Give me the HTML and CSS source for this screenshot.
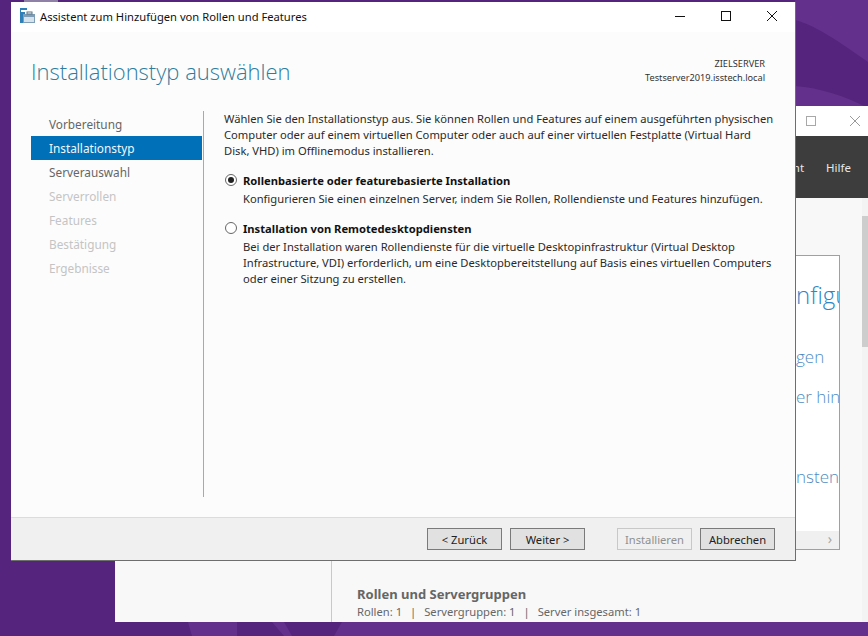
FILE: index.html
```html
<!DOCTYPE html>
<html lang="de">
<head>
  <meta charset="UTF-8">
  <meta name="viewport" content="width=device-width, initial-scale=1.0">
  <title>Assistent zum Hinzufügen von Rollen und Features</title>
  <link rel="stylesheet" href="styles.css">
</head>
<body>
  <div class="desktop">
    <svg class="wallpaper" width="868" height="636" viewBox="0 0 868 636">
      <path d="M795 0H868V62C840 42 815 25 795 20Z" fill="#63318c"/>
      <path d="M795 86C820 88 845 96 868 108V106H795Z" fill="#63318c"/>
      <path d="M188 622H237V636H192Z" fill="#63318c"/>
      <path d="M272 622H284L292 636H284Z" fill="#63318c"/>
      <path d="M342 622H868V636H334Z" fill="#63318c"/>
      <rect x="24" y="0" width="34" height="2" fill="#8f80a8"/>
    </svg>
    <div class="brand">WORTMANN AG</div>

    <!-- Server-Manager im Hintergrund -->
    <div class="back-window">
      <div class="back-title">
        <span class="back-max"></span>
        <svg class="back-close" width="12" height="12" viewBox="0 0 12 12"><path d="M1 1L11 11M11 1L1 11" stroke="#9a9a9a" fill="none"/></svg>
      </div>
      <div class="back-menu">
        <span class="menu-cut">ht</span>
        <span class="menu-item">Hilfe</span>
      </div>
      <div class="back-body">
        <div class="back-side"></div>
        <div class="back-main">
          <div class="back-card">
            <div class="card-lines">
              <div class="card-head">nfigu</div>
              <div class="card-link first">gen</div>
              <div class="card-link second">er hin</div>
              <div class="card-link third">nsten</div>
            </div>
            <div class="card-scroll"><span>&#8250;</span></div>
          </div>
          <h3 class="group-title">Rollen und Servergruppen</h3>
          <p class="group-info">Rollen: 1<span class="sep">|</span>Servergruppen: 1<span class="sep">|</span>Server insgesamt: 1</p>
        </div>
        <div class="back-scrollbar"><div class="back-thumb"></div></div>
      </div>
    </div>

    <!-- Assistent -->
    <div class="dialog">
      <div class="titlebar">
        <svg class="app-icon" width="15" height="16" viewBox="0 0 15 16">
          <rect x="0" y="0" width="5" height="15" fill="#2f7fb8"/>
          <rect x="1" y="2" width="6" height="2" fill="#fff"/>
          <rect x="5" y="0" width="2" height="2" fill="#2f7fb8"/>
          <rect x="3" y="6" width="12" height="9" fill="#7f9db5"/>
          <rect x="4" y="9" width="10" height="5" fill="#d7e3ec"/>
          <rect x="7" y="4" width="5" height="2" fill="none" stroke="#5b7488"/>
        </svg>
        <span class="title-text">Assistent zum Hinzufügen von Rollen und Features</span>
        <div class="win-buttons">
          <svg width="12" height="12" viewBox="0 0 12 12"><path d="M1 6.5H11" stroke="#111" fill="none"/></svg>
          <svg width="12" height="12" viewBox="0 0 12 12"><rect x="1.5" y="1.5" width="9" height="9" stroke="#111" fill="none"/></svg>
          <svg width="12" height="12" viewBox="0 0 12 12"><path d="M1 1L11 11M11 1L1 11" stroke="#111" fill="none"/></svg>
        </div>
      </div>

      <div class="head">
        <h1>Installationstyp auswählen</h1>
        <div class="target">
          <div>ZIELSERVER</div>
          <div>Testserver2019.isstech.local</div>
        </div>
      </div>

      <div class="content">
        <ul class="steps">
          <li>Vorbereitung</li>
          <li class="active">Installationstyp</li>
          <li>Serverauswahl</li>
          <li class="off">Serverrollen</li>
          <li class="off">Features</li>
          <li class="off">Bestätigung</li>
          <li class="off">Ergebnisse</li>
        </ul>
        <div class="pane">
          <p class="intro">Wählen Sie den Installationstyp aus. Sie können Rollen und Features auf einem ausgeführten physischen Computer oder auf einem virtuellen Computer oder auch auf einer virtuellen Festplatte (Virtual Hard Disk, VHD) im Offlinemodus installieren.</p>
          <div class="option">
            <span class="radio checked"></span>
            <div>
              <div class="option-title">Rollenbasierte oder featurebasierte Installation</div>
              <p>Konfigurieren Sie einen einzelnen Server, indem Sie Rollen, Rollendienste und Features hinzufügen.</p>
            </div>
          </div>
          <div class="option">
            <span class="radio"></span>
            <div>
              <div class="option-title">Installation von Remotedesktopdiensten</div>
              <p>Bei der Installation waren Rollendienste für die virtuelle Desktopinfrastruktur (Virtual Desktop Infrastructure, VDI) erforderlich, um eine Desktopbereitstellung auf Basis eines virtuellen Computers oder einer Sitzung zu erstellen.</p>
            </div>
          </div>
        </div>
      </div>

      <div class="footer">
        <button class="btn">&lt; Zurück</button>
        <button class="btn">Weiter &gt;</button>
        <button class="btn disabled gap-left">Installieren</button>
        <button class="btn">Abbrechen</button>
      </div>
    </div>
  </div>
</body>
</html>
```

FILE: styles.css
```css
* {
  margin: 0;
  padding: 0;
  box-sizing: border-box;
}
body {
  font-family: "Noto Sans", "Open Sans", sans-serif;
  font-size: 11.2px;
  color: #222;
  overflow: hidden;
}
.desktop {
  position: relative;
  width: 868px;
  height: 636px;
  background-color: #55247c;
  overflow: hidden;
}
.wallpaper {
  position: absolute;
  left: 0;
  top: 0;
}
.brand {
  position: absolute;
  left: 578px;
  top: 585px;
  font-family: "Liberation Sans", sans-serif;
  font-weight: bold;
  font-size: 41.5px;
  line-height: 46px;
  color: #f1ecf5;
  white-space: nowrap;
}

/* Hintergrundfenster */
.back-window {
  position: absolute;
  left: 115px;
  top: 106px;
  width: 753px;
  height: 516px;
  display: flex;
  flex-direction: column;
  background-color: #f8f8f8;
}
.back-title {
  height: 30px;
  flex: none;
  background-color: #fff;
  display: flex;
  align-items: center;
  justify-content: flex-end;
  gap: 33px;
  padding-right: 7px;
}
.back-max {
  width: 10px;
  height: 10px;
  border: 1px solid #a8a8a8;
}
.back-menu {
  height: 62px;
  flex: none;
  background-color: #3d3d3d;
  color: #e8e8e8;
  font-size: 11.5px;
  display: flex;
  justify-content: flex-end;
  align-items: center;
  gap: 22px;
  padding-right: 17px;
}
.back-body {
  flex: 1;
  display: flex;
  min-height: 0;
}
.back-side {
  width: 217px;
  flex: none;
  border-right: 1px solid #c9c9c9;
}
.back-main {
  flex: 1;
  padding: 57px 0 0 25px;
  position: relative;
}
.back-card {
  width: 483px;
  height: 295px;
  background-color: #fff;
  border: 1px solid #a0a0a0;
  display: flex;
  flex-direction: column;
  align-items: flex-end;
}
.card-lines {
  flex: 1;
  width: 43px;
  overflow: hidden;
  white-space: nowrap;
  color: #4f8cc4;
  font-family: "Open Sans", sans-serif;
  font-size: 17px;
  font-weight: 300;
}
.card-head {
  font-size: 24px;
  color: #2f86c4;
  margin-top: 24px;
  line-height: 30px;
}
.card-link {
  line-height: 24px;
}
.card-link.first {
  margin-top: 35px;
}
.card-link.second {
  margin-top: 16px;
}
.card-link.third {
  margin-top: 56px;
}
.card-scroll {
  width: 100%;
  height: 18px;
  background-color: #f0f0f0;
  color: #a5a5a5;
  font-size: 14px;
  line-height: 16px;
  text-align: right;
  padding-right: 7px;
}
.group-title {
  margin-top: 36px;
  font-size: 13px;
  font-weight: bold;
  color: #666;
  line-height: 16px;
}
.group-info {
  color: #666;
  line-height: 16px;
  margin-top: 2px;
}
.sep {
  margin: 0 8px;
}
.back-scrollbar {
  width: 6px;
  flex: none;
  background-color: #f3f3f3;
  padding-top: 18px;
}
.back-thumb {
  height: 131px;
  background-color: #cdcdcd;
}

/* Assistent */
.dialog {
  position: absolute;
  left: 11px;
  top: 2px;
  width: 785px;
  height: 559px;
  display: flex;
  flex-direction: column;
  background-color: #fcfcfc;
  border-right: 1px solid #6e6e6e;
  border-bottom: 1px solid #6e6e6e;
}
.titlebar {
  height: 30px;
  flex: none;
  background-color: #fff;
  display: flex;
  align-items: center;
  padding: 0 0 2px 9px;
}
.app-icon {
  margin-right: 5px;
}
.title-text {
  color: #111;
}
.win-buttons {
  margin-left: auto;
  display: flex;
  gap: 34px;
  padding-right: 17px;
}
.head {
  height: 75px;
  flex: none;
  display: flex;
  justify-content: space-between;
  padding: 23px 30px 0 20px;
}
h1 {
  font-family: "Open Sans", "Noto Sans", sans-serif;
  font-weight: 300;
  font-size: 22px;
  line-height: 32px;
  color: #2f7d9e;
}
.target {
  text-align: right;
  font-size: 9.2px;
  line-height: 14px;
  color: #333;
  padding-top: 2px;
}
.content {
  flex: 1;
  display: flex;
  padding: 4px 0 20px 20px;
  min-height: 0;
}
.steps {
  list-style: none;
  width: 172px;
  flex: none;
  padding: 1px 1px 0 0;
}
.steps li {
  height: 24px;
  line-height: 24px;
  padding-left: 18px;
  color: #666;
  font-size: 11.8px;
}
.steps li.active {
  background-color: #0070b8;
  color: #f2f8fc;
}
.steps li.off {
  color: #c4c4c4;
}
.pane {
  flex: 1;
  border-left: 1px solid #a9a9a9;
  padding: 0 16px 0 20px;
  color: #2a2a2a;
  line-height: 16px;
}
.intro {
  margin-bottom: 13px;
}
.option {
  display: flex;
  gap: 6px;
  margin-left: 1px;
  margin-bottom: 13px;
}
.option-title {
  font-weight: bold;
  color: #111;
  margin-bottom: 2px;
  margin-top: 1px;
}
.radio {
  width: 12px;
  height: 12px;
  flex: none;
  margin-top: 2px;
  border: 1px solid #666;
  border-radius: 50%;
  background-color: #fff;
  display: flex;
  align-items: center;
  justify-content: center;
}
.radio.checked::after {
  content: "";
  width: 6px;
  height: 6px;
  border-radius: 50%;
  background-color: #222;
}
.footer {
  height: 43px;
  flex: none;
  background-color: #f0f0f0;
  border-top: 1px solid #dcdcdc;
  display: flex;
  justify-content: flex-end;
  align-items: flex-start;
  gap: 8px;
  padding: 10px 20px 0 0;
}
.btn {
  width: 75px;
  height: 22px;
  font-family: inherit;
  font-size: 11.2px;
  color: #222;
  background-color: #e1e1e1;
  border: 1px solid #7a7a7a;
}
.btn.disabled {
  background-color: #f0f0f0;
  border-color: #c8c8c8;
  color: #8f8f8f;
}
.gap-left {
  margin-left: 24px;
}
```
